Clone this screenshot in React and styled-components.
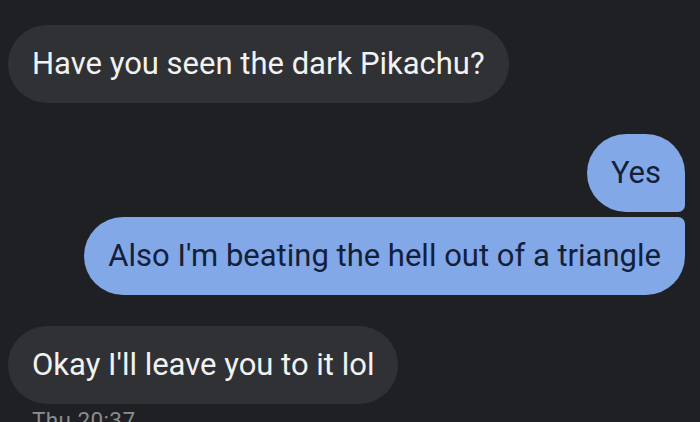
import React from 'react';
import styled, { createGlobalStyle } from 'styled-components';

const GlobalStyle = createGlobalStyle`
  html, body {
    margin: 0;
    padding: 0;
    background: #1f2024;
    overflow: hidden;
  }
  body {
    font-family: Roboto, "Noto Sans", sans-serif;
  }
`;

const Thread = styled.div`
  display: flex;
  flex-direction: column;
  height: 422px;
  padding: 25px 15px 0 8px;
  box-sizing: border-box;
  background: #1f2024;
`;

const Group = styled.div`
  display: flex;
  flex-direction: column;
  align-items: ${p => (p.$mine ? 'flex-end' : 'flex-start')};
  gap: 5px;
  margin-bottom: 31px;
`;

const Bubble = styled.div`
  box-sizing: border-box;
  height: 78px;
  padding: 0 24px;
  display: flex;
  align-items: center;
  font-size: 31px;
  line-height: 36px;
  white-space: nowrap;
  background: ${p => (p.$mine ? '#83a8e8' : '#303135')};
  color: ${p => (p.$mine ? '#142039' : '#f2f2f2')};
  border-radius: ${p => p.$radius || '39px'};
`;

const Stamp = styled.div`
  margin: -29px 0 0 24px;
  font-size: 22.5px;
  line-height: 28px;
  color: #8b8c90;
  letter-spacing: 0.4px;
`;

export default function App() {
  return (
    <>
      <GlobalStyle />
      <Thread>
        <Group>
          <Bubble>Have you seen the dark Pikachu?</Bubble>
        </Group>
        <Group $mine>
          <Bubble $mine $radius="39px 39px 7px 39px">Yes</Bubble>
          <Bubble $mine $radius="39px 7px 39px 39px">
            Also I'm beating the hell out of a triangle
          </Bubble>
        </Group>
        <Group>
          <Bubble>Okay I'll leave you to it lol</Bubble>
        </Group>
        <Stamp>Thu 20:37</Stamp>
      </Thread>
    </>
  );
}
